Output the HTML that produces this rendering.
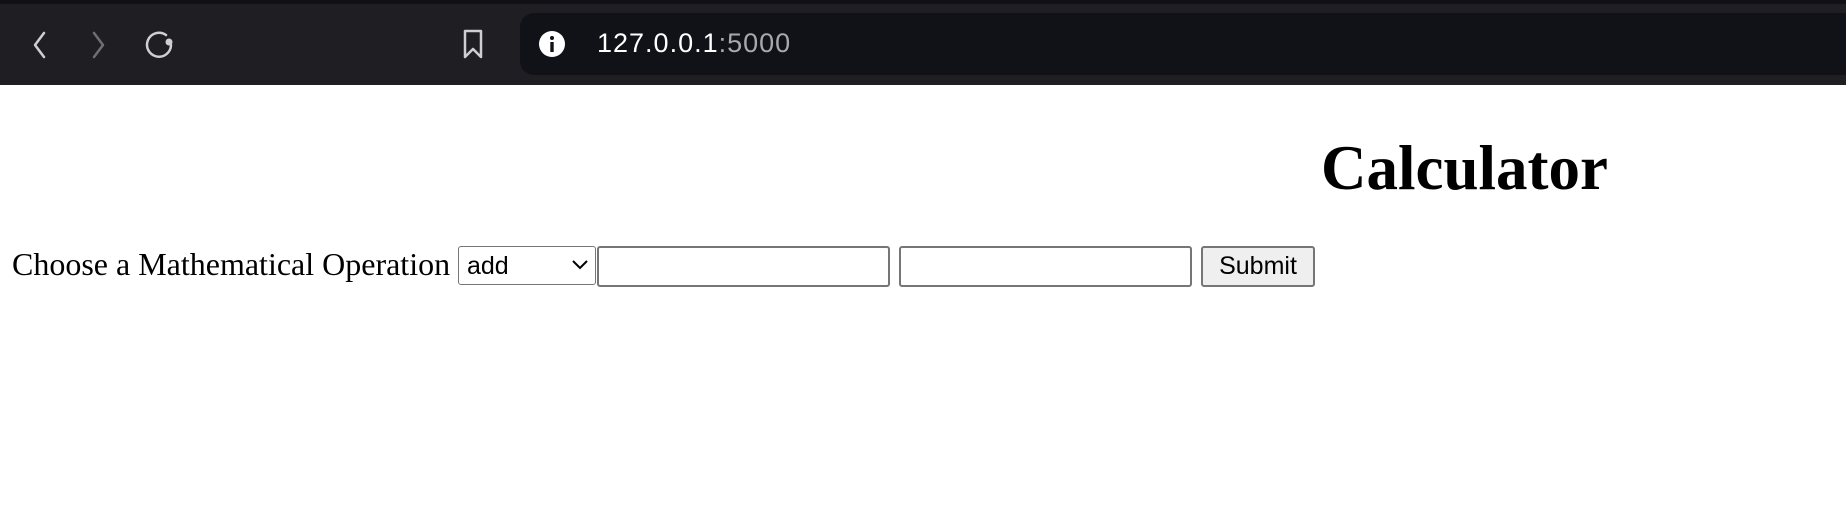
<!DOCTYPE html>
<html><head><meta charset="utf-8"><style>
html,body{margin:0;padding:0;width:1846px;height:508px;overflow:hidden;background:#fff;position:relative}
.tb{position:absolute;left:0;top:0;width:1846px;height:85px;background:#1f1e23}
.strip{position:absolute;left:0;top:0;width:1846px;height:4px;background:#111115}
.url{position:absolute;left:520px;top:13px;width:1340px;height:62px;background:#111217;border-radius:14px}
.urltext{position:absolute;left:597px;top:28px;font:27px "Liberation Sans",sans-serif;color:#fff;letter-spacing:1px}
.urltext span{color:#a9a9ad}
svg{position:absolute}
h1{position:absolute;left:1321px;top:132px;margin:0;font:bold 63px "Liberation Serif",serif;color:#000}
.lbl{position:absolute;left:12px;top:246px;font:32px "Liberation Serif",serif;color:#000}
.box{position:absolute;box-sizing:border-box;border:2px solid #767676;border-radius:3px;background:#fff}
.ctl{font:25px "Liberation Sans",sans-serif;color:#000}
</style></head><body>
<div class="tb"></div><div class="strip"></div>
<svg style="left:30px;top:30px" width="20" height="30"><path d="M14 3 L5 15 L14 27" stroke="#cfcfd3" stroke-width="2.5" fill="none" stroke-linecap="round" stroke-linejoin="round"/></svg>
<svg style="left:89px;top:30px" width="20" height="30"><path d="M5 3 L14 15 L5 27" stroke="#6e6e73" stroke-width="2.5" fill="none" stroke-linecap="round" stroke-linejoin="round"/></svg>
<svg style="left:144px;top:29px" width="32" height="32"><path d="M22 6 A12 12 0 1 0 27 16" stroke="#cfcfd3" stroke-width="2.5" fill="none" stroke-linecap="round"/><circle cx="25" cy="13" r="3.5" fill="#cfcfd3"/></svg>
<svg style="left:462px;top:28px" width="22" height="32"><path d="M3 3 H19 V29 L11 21 L3 29 Z" stroke="#cfcfd3" stroke-width="2.5" fill="none" stroke-linejoin="round"/></svg>
<div class="url"></div>
<svg style="left:538px;top:30px" width="28" height="28"><circle cx="14" cy="14" r="13" fill="#fff"/><rect x="12.3" y="12" width="3.4" height="10" fill="#111217"/><circle cx="14" cy="8" r="2" fill="#111217"/></svg>
<div class="urltext">127.0.0.1<span>:5000</span></div>
<h1>Calculator</h1>
<div class="lbl">Choose a Mathematical Operation</div>
<div class="box ctl" style="left:458px;top:246px;width:138px;height:39px;border-width:1.5px"><span style="position:absolute;left:8px;top:5px">add</span>
<svg style="left:112px;top:12px" width="18" height="12"><path d="M2 2 L9 9 L16 2" stroke="#000" stroke-width="2" fill="none"/></svg></div>
<div class="box" style="left:597px;top:246px;width:293px;height:41px"></div>
<div class="box" style="left:899px;top:246px;width:293px;height:41px"></div>
<div class="box ctl" style="left:1201px;top:246px;width:114px;height:41px;background:#efefef;text-align:center;line-height:37px">Submit</div>
</body></html>
